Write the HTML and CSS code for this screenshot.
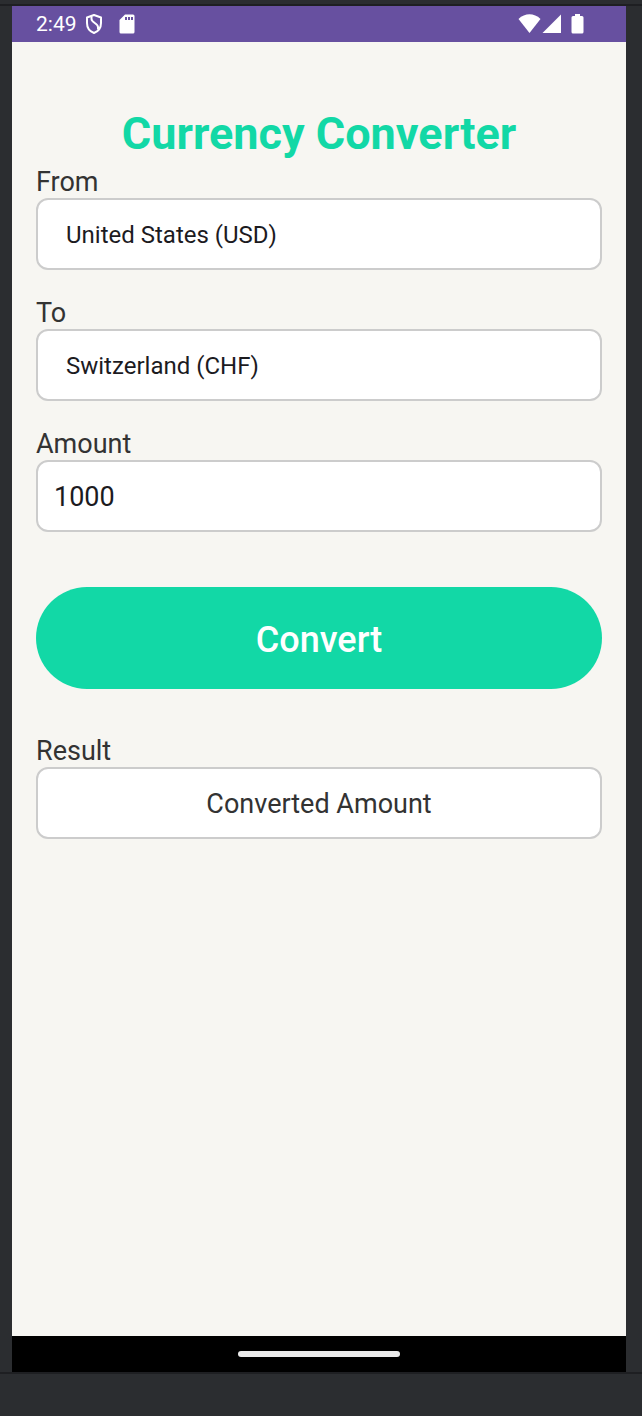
FILE: index.html
```html
<!DOCTYPE html>
<html lang="en">
<head>
<meta charset="utf-8">
<meta name="viewport" content="width=device-width, initial-scale=1">
<title>Currency Converter</title>
<link rel="stylesheet" href="styles.css">
</head>
<body>
<div class="emulator">
  <div class="device">
    <header class="status-bar">
      <span class="clock">2:49</span>
      <svg class="icon-shield" width="18" height="22" viewBox="0 0 18 22" aria-hidden="true">
        <path d="M9 2 L16 4.500 V10 C16 15 13 18.500 9 20 C5 18.500 2 15 2 10 V4.500 Z" fill="none" stroke="currentColor" stroke-width="2" stroke-linejoin="round"/>
        <path d="M6.500 3.500 V6 C6.500 9.500 13 10.500 13 14 V16.500" fill="none" stroke="currentColor" stroke-width="2"/>
      </svg>
      <svg class="icon-card" width="16" height="20" viewBox="0 0 16 20" aria-hidden="true">
        <path fill="currentColor" fill-rule="evenodd" d="M6 .5 H14 Q15.500 .5 15.500 2 V18 Q15.500 19.500 14 19.500 H2 Q.5 19.500 .5 18 V6 Z M6 3 V6 H8 V3 Z M9 3 V6 H11 V3 Z M12 3 V6 H14 V3 Z"/>
      </svg>
      <div class="signals">
        <svg width="24" height="20" viewBox="0 0 24 20" aria-hidden="true"><path fill="currentColor" d="M.5 5 C7 -1.200 16 -1.200 22.500 5 L11.500 19 Z"/></svg>
        <svg width="20" height="20" viewBox="0 0 20 20" aria-hidden="true"><path fill="currentColor" d="M19 .5 V19 H.5 Z"/></svg>
        <svg class="icon-battery" width="13" height="20" viewBox="0 0 13 20" aria-hidden="true"><path fill="currentColor" d="M4 0 H9 V2 H11 Q12.500 2 12.500 3.500 V18 Q12.500 19.500 11 19.500 H2 Q.5 19.500 .5 18 V3.500 Q.5 2 2 2 H4 Z"/></svg>
      </div>
    </header>
    <main class="screen">
      <h1 class="title">Currency Converter</h1>
      <form class="converter">
        <div class="field">
          <label for="from">From</label>
          <select id="from" class="box picker"><option>United States (USD)</option><option>Switzerland (CHF)</option></select>
        </div>
        <div class="field">
          <label for="to">To</label>
          <select id="to" class="box picker"><option>Switzerland (CHF)</option><option>United States (USD)</option></select>
        </div>
        <div class="field">
          <label for="amount">Amount</label>
          <input id="amount" class="box amount" type="text" inputmode="decimal" value="1000">
        </div>
        <button class="convert" type="button">Convert</button>
        <div class="field">
          <label for="result">Result</label>
          <output id="result" class="box result" for="from to amount">Converted Amount</output>
        </div>
      </form>
    </main>
    <footer class="nav-bar"><span class="handle"></span></footer>
  </div>
</div>
</body>
</html>
```
FILE: styles.css
```css
* {
  box-sizing: border-box;
}

body {
  margin: 0;
  background: #2b2d30;
  font-family: Roboto, "Liberation Sans", sans-serif;
}

.emulator {
  display: flex;
  flex-direction: column;
  min-height: 100vh;
  padding: 4px 0 42px;
}

.device {
  flex: 1;
  display: flex;
  flex-direction: column;
  padding: 0 16px 0 12px;
  border-top: 2px solid #1e1f22;
  border-bottom: 2px solid #1e1f22;
}

.status-bar {
  display: flex;
  align-items: center;
  height: 36px;
  padding: 0 42px 0 24px;
  background: #6750a0;
  color: #fff;
}

.clock {
  font-size: 21px;
  line-height: 36px;
}

.icon-shield {
  margin-left: 8px;
}

.icon-card {
  margin-left: 16px;
}

.signals {
  display: flex;
  align-items: center;
  margin-left: auto;
}

.icon-battery {
  margin-left: 9px;
}

.screen {
  flex: 1;
  padding: 64px 24px;
  background: #f7f6f2;
}

.title {
  margin: 0;
  color: #12d8a6;
  font-size: 45px;
  font-weight: 700;
  line-height: 56px;
  text-align: center;
}

.converter {
  display: flex;
  flex-direction: column;
  gap: 27px;
  padding-top: 4px;
}

.field {
  display: flex;
  flex-direction: column;
}

.field label {
  color: #333;
  font-size: 27px;
  line-height: 32px;
}

.box {
  width: 100%;
  height: 72px;
  margin: 0;
  border: 2px solid #ccc;
  border-radius: 12px;
  background: #fff;
  color: #1c1b1f;
  font-family: inherit;
  font-size: 27px;
}

.picker {
  appearance: none;
  padding: 1px 28px 0;
  font-size: 24px;
}

.amount {
  padding: 2px 16px 0;
}

.result {
  display: flex;
  align-items: center;
  justify-content: center;
  padding-top: 2px;
  color: #333;
}

.convert {
  height: 102px;
  margin: 28px 0 19px;
  padding: 3px 0 0;
  border: 0;
  border-radius: 51px;
  background: #12d8a6;
  color: #fff;
  font-family: inherit;
  font-size: 36px;
  font-weight: 500;
}

.nav-bar {
  display: flex;
  align-items: center;
  justify-content: center;
  height: 36px;
  background: #000;
}

.handle {
  width: 162px;
  height: 6px;
  border-radius: 3px;
  background: #ebebeb;
}
```
